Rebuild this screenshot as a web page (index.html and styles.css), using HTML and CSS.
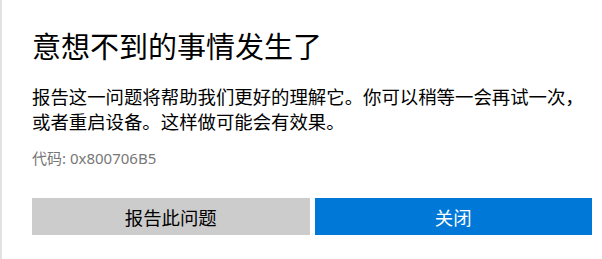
FILE: index.html
```html
<!DOCTYPE html>
<html lang="zh-CN">
<head>
<meta charset="utf-8">
<link rel="stylesheet" href="styles.css">
</head>
<body>
<div class="dialog">
  <h1 class="title">意想不到的事情发生了</h1>
  <p class="message">报告这一问题将帮助我们更好的理解它。你可以稍等一会再试一次，<br>或者重启设备。这样做可能会有效果。</p>
  <p class="code">代码: 0x800706B5</p>
  <div class="actions">
    <button class="btn btn-secondary">报告此问题</button>
    <button class="btn btn-primary">关闭</button>
  </div>
</div>
</body>
</html>
```
FILE: styles.css
```css
html, body {
  margin: 0;
  padding: 0;
  background: #ffffff;
}
body {
  width: 602px;
  height: 259px;
  overflow: hidden;
  font-family: "Segoe UI", "Noto Sans", "Noto Sans CJK SC", sans-serif;
}
.dialog {
  box-sizing: border-box;
  height: 259px;
  border-left: 2px solid #e2e2e2;
  padding: 29px 10px 0 30px;
  display: flex;
  flex-direction: column;
}
.title {
  margin: 0;
  font-size: 29px;
  line-height: 36px;
  font-weight: 400;
  color: #000;
}
.message {
  margin: 19px 0 0;
  font-size: 18.4px;
  line-height: 25px;
  white-space: nowrap;
  color: #000;
}
.code {
  margin: 14px 0 0;
  font-size: 15px;
  line-height: 20px;
  color: #777777;
}
.actions {
  margin-top: 30px;
  display: flex;
  gap: 5px;
}
.btn {
  flex: 1 1 0;
  height: 37px;
  border: 0;
  padding: 0;
  font-family: inherit;
  font-size: 18.4px;
}
.btn-secondary {
  background: #cccccc;
  color: #000;
}
.btn-primary {
  background: #0078d7;
  color: #fff;
}
```
